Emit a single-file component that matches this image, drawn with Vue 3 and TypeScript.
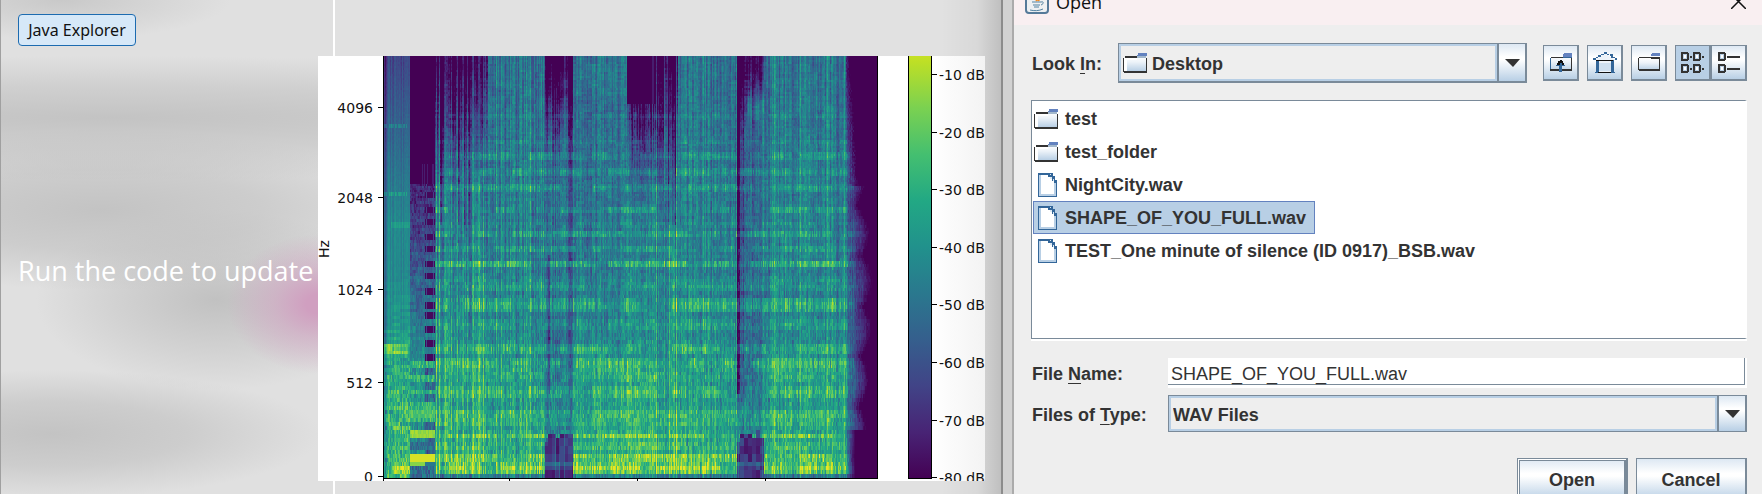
<script setup lang="ts">
import { onMounted, ref } from 'vue'

type Rgb = [number, number, number]
interface Section { from: number; to: number; kind: string }

const viridis: Rgb[] = [
  [68, 1, 84], [72, 36, 117], [65, 68, 135], [53, 95, 141], [42, 120, 142], [33, 145, 140],
  [34, 168, 132], [68, 191, 112], [122, 209, 81], [189, 223, 38], [253, 231, 37],
]
const stops = viridis.map((c, i) => ({ offset: i / 10, color: `rgb(${c.join(',')})` }))

const W = 493
const H = 422
const canvas = ref<HTMLCanvasElement | null>(null)
const lookIn = ref('Desktop')
const fileType = ref('WAV Files')
const fileName = ref('SHAPE_OF_YOU_FULL.wav')
const view = ref('list')

const files = [
  { name: 'test', folder: true },
  { name: 'test_folder', folder: true },
  { name: 'NightCity.wav', folder: false },
  { name: 'SHAPE_OF_YOU_FULL.wav', folder: false },
  { name: 'TEST_One minute of silence (ID 0917)_BSB.wav', folder: false },
]

const yTicks = [
  { label: '4096', y: 52 }, { label: '2048', y: 142 }, { label: '1024', y: 234 },
  { label: '512', y: 327 }, { label: '0', y: 421 },
]
const dbTicks = [10, 20, 30, 40, 50, 60, 70, 80].map((db, i) => ({
  label: `-${db} dB`, y: Math.round(18 + i * 57.6),
}))

const sections: Section[] = [
  { from: 0, to: 26, kind: 'intro' }, { from: 26, to: 51, kind: 'break' },
  { from: 51, to: 104, kind: 'verse' }, { from: 104, to: 161, kind: 'full' },
  { from: 161, to: 189, kind: 'drop' }, { from: 189, to: 243, kind: 'full' },
  { from: 243, to: 272, kind: 'quiet' }, { from: 272, to: 294, kind: 'verse' },
  { from: 294, to: 353, kind: 'full' }, { from: 353, to: 380, kind: 'drop2' },
  { from: 380, to: 493, kind: 'full' },
]
const harmonics = [
  [60, 4, 0.08], [86, 4, 0.08], [100, 6, 0.15], [116, 6, 0.16], [132, 6, 0.17], [154, 6, 0.19],
  [168, 5, 0.08], [178, 6, 0.2], [193, 6, 0.16], [208, 6, 0.28], [224, 5, 0.08], [231, 7, 0.12],
  [249, 11, 0.24], [269, 9, 0.13], [293, 10, 0.18], [308, 10, 0.22], [320, 9, 0.12], [336, 10, 0.16],
  [358, 8, 0.15], [366, 8, 0.12], [380, 6, 0.2], [391, 7, 0.1], [401, 8, 0.24], [412, 8, 0.27],
]

function noise(a: number, b: number): number {
  let h = Math.imul(a + 101, 374761393) ^ Math.imul(b + 57, 668265263)
  h = Math.imul(h ^ (h >>> 13), 1274126177)
  return ((h ^ (h >>> 16)) >>> 0) / 4294967296
}
function ramp(v: number, a: number, b: number): number {
  return Math.min(1, Math.max(0, (v - a) / (b - a)))
}
function rowEdges(): number[] {
  const edges: number[] = [0]
  let y = 0
  while (y < H) {
    y += y > 325 ? 4 : y > 230 ? 3 + (edges.length % 2) : y > 140 ? 3 : 2
    edges.push(Math.min(y, H))
  }
  return edges
}

function level(x: number, y: number, row: number): number {
  const kind = sections.find((s) => x >= s.from && x < s.to)?.kind ?? 'full'
  const streak = noise(x, 1) - 0.5
  const beat = noise(x, 5) > 0.88 ? 0.08 : 0
  const broad = noise(x >> 2, 2) - 0.5
  const grain = noise(x, row + 10) - 0.5
  const coarse = noise(x >> 1, (row >> 2) + 300) - 0.5
  const patch = noise(x >> 3, row + 900) - 0.5
  const depth = y / H
  let v = 0.37 + depth * 0.11 + ramp(y, 250, 410) * 0.12 + beat
  v += streak * (0.2 - 0.08 * depth) + grain * (0.06 + 0.14 * depth) + coarse * 0.1
  v += patch * 0.07 + broad * 0.05
  for (const [c, h, a] of harmonics) {
    const gate = noise(x >> 4, c + 400) > 0.25 ? 1 : 0.3
    const d = Math.abs(y - c) / (h / 2)
    if (d <= 1.2) v += a * gate * (1 - d * 0.4) * (0.3 + 1.1 * noise(x, c))
  }
  if (y > 417) v -= 0.2

  if (kind === 'intro') {
    v = 0.2 + ramp(y, 0, 170) * 0.26 + ramp(y, 220, 320) * 0.14 + ramp(y, 310, 410) * 0.08
    v += streak * 0.1 + grain * (0.04 + ramp(y, 270, 340) * 0.2) + patch * ramp(y, 200, 300) * 0.18
    if (x < 3) v -= 0.12
    if (Math.abs(y - 293) < 6 && x < 24) v += 0.2
    if ((Math.abs(y - 138) < 3 || Math.abs(y - 70) < 3) && noise(x, 7) > 0.45) v += 0.14
    if (Math.abs(y - 168) < 3 && x > 6) v += 0.08
    if (y > 408 && y < 418 && x > 7) v += 0.2
  } else if (kind === 'break') {
    const right = x > 40
    if (y < 128) v = x > 33 && y > 108 && noise(x, 3) > 0.7 ? 0.08 : 0
    else {
      v = 0.1 + ramp(y, 128, 320) * 0.4 + grain * 0.12 + coarse * 0.12 + patch * 0.1
      const pulse = Math.sin((y - 8) / 2.15) > 0
      if (right && y < 315) v = pulse ? v + 0.02 : noise(x, 8) > 0.75 ? 0.2 : 0.02
      if (y > 305) v = (pulse ? 0.64 : right ? 0.32 : 0.5) + grain * 0.22 + coarse * 0.12
      if (y > 354 && y < 362) v = 0.74 + grain * 0.15
      if (y > 375 && y < 383) v = 0.84 + grain * 0.08
      if (y > 384 && y < 395) v = 0.36 + grain * 0.2
      if (y > 396 && y < 409) v = y < 405 ? 0.94 : right ? 0.4 : 0.82
      if (y > 410) v = 0.35 + grain * 0.25
    }
  } else if (kind === 'verse') {
    const band = noise(x >> 2, 6)
    v -= (1 - ramp(y, 10, 80 + band * 80)) * (0.2 + band * 0.26) + (1 - ramp(y, 130, 240)) * 0.04
    if (noise(x >> 1, 15) > 0.8 && y < 170) v -= 0.16
    if (noise(x, 16) > 0.86) v += 0.16
  } else if (kind === 'drop' || kind === 'drop2') {
    const late = kind === 'drop2'
    const left = x < (late ? 357 : 180)
    const band = noise(x >> 2, 20)
    v -= (1 - ramp(y, 8, (late ? 40 : 80) + band * 60)) * (left ? 0.44 : 0.3) + 0.05
    if (band > 0.55 && y < 345) v -= 0.1 * (1 - ramp(y, 200, 345) * 0.5)
    v -= ramp(y, 230, 290) * (0.07 + coarse * 0.2)
    if (late && x < 356 && y < 340) v -= 0.28
    if (!late && x > 163 && x < 166 && y > 200 && y < 340) v -= 0.2
    if (late && x > 362) v += 0.14 * Math.exp(-(((y - 50) / 14) ** 2))
    if (y > 374 + noise(x >> 2, 60) * 12) {
      v = 0.04 + noise(x >> 2, (row >> 1) + 70) * 0.2 + (noise(x, 21) > 0.86 ? 0.14 : 0)
      if (y > 406 && y < 412) v += 0.12
    }
  } else if (kind === 'quiet') {
    if (y < 48) v = noise(x, 30) > 0.88 ? 0.08 : 0
    else v -= (1 - ramp(y, 48, 150)) * (noise(x, 31) > 0.5 ? 0.46 : 0.26)
    if (y > 300) v += 0.06
  } else if (x > 189 && x < 243 && y < 290 && y > 40) {
    v -= 0.04
  }

  const scallop = y < 130 ? 0 : 9 * Math.abs(Math.sin((y - 150) / 16)) - 3
  const edge = 463 + ramp(y, 0, 130) * 8 + ramp(y, 120, 210) * 9 - ramp(y, 260, 420) * 8 + scallop
  if (x > 461) {
    v = (v - 0.05) * (1 - ramp(x + noise(x, row) * 3, Math.min(461, edge - 8), edge + 3))
    if (y > 374) v *= 1 - ramp(x, 462, 471)
  }
  return Math.min(0.97, Math.max(0, v))
}

function drawSpectrogram(target: HTMLCanvasElement): void {
  const ctx = target.getContext('2d')
  if (!ctx) return
  const edges = rowEdges()
  const image = ctx.createImageData(W, H)
  for (let row = 0; row < edges.length - 1; row++) {
    const mid = (edges[row] + edges[row + 1]) / 2
    for (let x = 0; x < W; x++) {
      const v = level(x, mid, row) * 10
      const i = Math.min(9, Math.floor(v))
      for (let y = edges[row]; y < edges[row + 1]; y++) {
        const p = (y * W + x) * 4
        for (let c = 0; c < 3; c++) {
          image.data[p + c] = viridis[i][c] + (viridis[i + 1][c] - viridis[i][c]) * (v - i)
        }
        image.data[p + 3] = 255
      }
    }
  }
  ctx.putImageData(image, 0, 0)
}

onMounted(() => {
  if (canvas.value) drawSpectrogram(canvas.value)
})
</script>

<template>
  <svg class="defs" aria-hidden="true">
    <defs>
      <linearGradient id="folder-fill" x1="0" y1="0" x2="0" y2="1">
        <stop offset="0" stop-color="#fff" /><stop offset=".4" stop-color="#edf3f9" />
        <stop offset="1" stop-color="#b8cfe5" />
      </linearGradient>
      <symbol id="folder" viewBox="0 0 24 20">
        <path d="M2 5h12v-2h9v15H2z" fill="url(#folder-fill)" />
        <path d="M2 3h12v2H2zM0 5h1v14H0zM1 18h23v2H1zM23 5h1v14h-1z" fill="#333" />
        <path d="M1 5h13v2H4v11H1z" fill="#fff" />
        <path d="M15 0h9v3h-10v-1h1z" fill="#6382bf" /><path d="M14 3h9v2h-9z" fill="#a3b8cc" />
      </symbol>
      <symbol id="file" viewBox="0 0 19 24">
        <path d="M0 0h15v3h2v4h2v17H0z" fill="#336699" />
        <path d="M1 2h10l7 8v13H1z" fill="#b8cfe5" /><path d="M3 2h8l5 7v12H3z" fill="#fff" />
        <path d="M10 1h3v2h2v2h2v3h1v2h-2V8h-2V6h-2V4h-2z" fill="#336699" />
        <path d="M12 4h2v2h-2zM15 6h1v2h-1zM12 1h1v1h-1z" fill="#dce8f3" />
      </symbol>
    </defs>
  </svg>
  <div class="desktop">
    <main class="viewer">
      <div class="side">
        <button class="explorer" type="button">Java Explorer</button>
        <p class="hint">Run the code to update</p>
      </div>
      <figure class="figure" aria-label="Spectrogram">
        <svg class="y-axis" width="66" height="425" aria-hidden="true">
          <text class="tick" transform="translate(11 193) rotate(-90)" text-anchor="middle">Hz</text>
          <g v-for="t in yTicks" :key="t.label">
            <text class="tick" x="55" :y="t.y + 5" text-anchor="end">{{ t.label }}</text>
            <path :d="`M60 ${t.y - 0.5}h5`" stroke="#000" />
          </g>
          <path d="M65.500 0v425" stroke="#000" />
        </svg>
        <div class="plot">
          <canvas ref="canvas" class="spectrogram" :width="W" :height="H"></canvas>
          <div class="x-ticks"><i></i><i></i><i></i><i></i></div>
        </div>
        <svg class="colorbar" width="77" height="425" aria-hidden="true">
          <defs>
            <linearGradient id="db" gradientUnits="userSpaceOnUse" x1="0" y1="422" x2="0" y2="-40">
              <stop v-for="s in stops" :key="s.offset" :offset="s.offset" :stop-color="s.color" />
            </linearGradient>
          </defs>
          <path d="M0 0h24v423H0z" fill="#000" /><path d="M1 0h22v422H1z" fill="url(#db)" />
          <g v-for="t in dbTicks" :key="t.label">
            <path :d="`M24 ${t.y + 0.5}h5`" stroke="#000" />
            <text class="tick" x="31" :y="t.y + 6">{{ t.label }}</text>
          </g>
        </svg>
      </figure>
    </main>

    <section class="dialog" aria-label="Open">
      <header class="titlebar">
        <svg class="java" width="24" height="24" viewBox="0 0 24 24" aria-hidden="true">
          <rect x="1" y="1" width="22" height="22" rx="3" fill="#edf0f2" stroke="#557a99" stroke-width="2" />
          <path d="M13 3c3 3-4 4-1 8M15 7c-2 1-2 2-1 4" fill="none" stroke="#f08a24" stroke-width="2" />
          <path d="M7 12h9M8 15h7M9 17h5M5 20c4 1 9 1 13-1M16 12c3-1 3 2 0 3" fill="none" stroke="#5382a1" stroke-width="1" />
        </svg>
        <h1 class="title">Open</h1>
        <button class="close" type="button" aria-label="Close">
          <svg width="15" height="15" viewBox="0 0 15 15"><path d="M0 0l15 15M15 0L0 15" stroke="#111" stroke-width="1.500" /></svg>
        </button>
      </header>

      <div class="body">
        <div class="lookup">
          <label for="look-in">Look <u>I</u>n:</label>
          <div class="combo wide">
            <div class="value">
              <svg width="24" height="20" shape-rendering="crispEdges"><use href="#folder" /></svg>
              <select id="look-in" v-model="lookIn"><option>Desktop</option></select>
            </div>
            <span class="arrow"><svg width="15" height="8"><path d="M0 0h15L8 8z" fill="#333" /></svg></span>
          </div>
          <div class="tools">
            <button class="tool" type="button" aria-label="Up one level">
              <svg width="22" height="20" viewBox="0 0 22 20" shape-rendering="crispEdges">
                <path d="M1 5h12V2h8v16H1z" fill="url(#folder-fill)" />
                <path d="M1 4h12v1H1zM0 16h21v2H0zM21 5h1v13h-1z" fill="#333" /><path d="M0 5h1v11H0zM13 4h9v1h-9z" fill="#336699" />
                <path d="M14 0h8v4h-9V1h1z" fill="#6382bf" /><path d="M9 10h3v9H9zM6 12h9v1H6z" fill="#336699" />
                <path d="M10 7h2v1h1v2h1v2h-2v-2h-2v2H7v-2h1V8h2z" fill="#111" />
              </svg>
            </button>
            <button class="tool" type="button" aria-label="Home">
              <svg width="24" height="22" viewBox="0 0 24 22" shape-rendering="crispEdges">
                <path d="M12 2L1 8h22zM4 8h16v12H4z" fill="#edf3f9" /><path d="M6 11h13v8H6z" fill="#cfe0f0" />
                <path d="M11 0h3v2h-3zM8 2h3v1H8zM14 2h2v1h-2zM5 3h3v2H5zM17 2h3v3h2v1h-4zM3 5h2v1H3zM0 6h3v2H0zM22 6h2v2h-2zM3 8h3v12H3zM18 8h3v12h-3zM2 20h4v1H2zM18 20h4v1h-4z" fill="#336699" />
                <path d="M3 8h17v1H3zM5 20h13v1H5z" fill="#111" />
              </svg>
            </button>
            <button class="tool" type="button" aria-label="Create new folder">
              <svg width="22" height="20" viewBox="0 0 22 20" shape-rendering="crispEdges">
                <path d="M1 5h20v12H1z" fill="url(#folder-fill)" />
                <path d="M1 4h12v1H1zM0 5h1v12H0zM1 16h21v2H1zM21 5h1v13h-1zM13 4h9v2h-9z" fill="#333" />
                <path d="M14 0h8v3h-9V1h1z" fill="#6382bf" />
              </svg>
            </button>
            <div class="views">
              <button class="tool" :class="{ on: view === 'list' }" type="button" aria-label="List" @click="view = 'list'">
                <svg width="24" height="22" viewBox="0 0 24 22" shape-rendering="crispEdges">
                  <g v-for="p in [[0, 0], [12, 0], [0, 12], [12, 12]]" :key="p.join()" :transform="`translate(${p[0]} ${p[1]})`">
                    <path d="M0 0h7v1h1v7H7v1H0z" fill="#333" /><path d="M2 2h4v5H2z" fill="#b8cfe5" /><path d="M3 3h2v3H3z" fill="#fff" /><path d="M9 4h2v2H9z" fill="#333" />
                  </g>
                </svg>
              </button>
              <button class="tool" :class="{ on: view === 'details' }" type="button" aria-label="Details" @click="view = 'details'">
                <svg width="24" height="22" viewBox="0 0 24 22" shape-rendering="crispEdges">
                  <g v-for="p in [0, 12]" :key="p" :transform="`translate(1 ${p})`">
                    <path d="M0 0h7v1h1v7H7v1H0z" fill="#333" /><path d="M2 2h4v5H2z" fill="#b8cfe5" /><path d="M3 3h2v3H3z" fill="#fff" /><path d="M9 4h13v2H9z" fill="#333" />
                  </g>
                </svg>
              </button>
            </div>
          </div>
        </div>

        <ul class="files" role="listbox" aria-label="Files">
          <li v-for="f in files" :key="f.name" class="file" :class="{ selected: f.name === fileName }" role="option" :aria-selected="f.name === fileName" @click="fileName = f.name">
            <svg v-if="f.folder" width="24" height="20" shape-rendering="crispEdges"><use href="#folder" /></svg>
            <svg v-else class="doc" width="19" height="24" shape-rendering="crispEdges"><use href="#file" /></svg>
            <span>{{ f.name }}</span>
          </li>
        </ul>

        <div class="fields">
          <label for="file-name">File <u>N</u>ame:</label>
          <input id="file-name" v-model="fileName" class="name" type="text" />
          <label for="file-type">Files of <u>T</u>ype:</label>
          <div class="combo">
            <div class="value">
              <select id="file-type" v-model="fileType"><option>WAV Files</option></select>
            </div>
            <span class="arrow"><svg width="15" height="8"><path d="M0 0h15L8 8z" fill="#333" /></svg></span>
          </div>
        </div>

        <div class="actions">
          <button class="action default" type="button">Open</button>
          <button class="action" type="button">Cancel</button>
        </div>
      </div>
    </section>
  </div>
</template>

<style>
body { overflow: hidden; }
</style>

<style scoped>
.defs { position: absolute; width: 0; height: 0; }
.desktop {
  display: grid;
  grid-template-columns: minmax(0, 1003fr) minmax(0, 750fr);
  column-gap: 9px;
  height: 100vh;
  overflow: hidden;
  background: #d2d2d2;
}
.viewer {
  box-sizing: border-box;
  display: grid;
  grid-template-columns: 317px minmax(0, 1fr);
  align-items: start;
  padding-right: 16px;
  border-left: 1px solid #a0a0a0;
  border-right: 2px solid #8c8c8c;
  background:
    linear-gradient(90deg, transparent calc(100% - 60px), #0000000a calc(100% - 24px), #00000026),
    linear-gradient(#fff, #fff) 332px 0 / 2px 100% no-repeat,
    linear-gradient(#e1e1e1, #e1e1e1) 334px 0 / 100% 100% no-repeat,
    radial-gradient(92px 70px at 318px 304px, #d09fc0 0 14%, #d09fc088 48%, #d09fc000),
    radial-gradient(170px 40px at 60px 0, #bdbdbdaa, #bdbdbd00),
    radial-gradient(900px 62px at 110px 118px, #bcbcbccc, #bcbcbc77 50%, #bcbcbc00),
    radial-gradient(320px 80px at 100px 210px, #bcbcbccc, #bcbcbc88 50%, #bcbcbc00),
    radial-gradient(180px 90px at 215px 300px, #b6b6b6bb, #bcbcbc66 55%, #bcbcbc00),
    radial-gradient(270px 64px at 50px 434px, #bcbcbccc, #bcbcbc88 50%, #bcbcbc00),
    #e0e0e0;
}
.side { padding: 14px 0 0 17px; }
.explorer {
  display: block;
  box-sizing: border-box;
  width: 118px;
  height: 32px;
  padding: 0;
  border: 1px solid #1c6bb0;
  border-radius: 4px;
  background: #d6e8f8;
  color: #111;
  font: 16px/30px "Noto Sans", "Open Sans", sans-serif;
}
.hint {
  margin: 205px 0 0;
  color: #fff;
  font: 27px/40px "Open Sans", "Noto Sans", sans-serif;
  white-space: nowrap;
}
.figure {
  display: grid;
  grid-template-columns: 66px minmax(0, 1fr) 77px;
  height: 425px;
  margin: 56px 0 0;
  overflow: hidden;
  background: linear-gradient(90deg, #fff 92%, #f3f3f3);
}
.tick { font: 14px "DejaVu Sans", sans-serif; fill: #111; }
.plot { margin-right: 30px; }
.spectrogram {
  display: block;
  box-sizing: border-box;
  width: 100%;
  height: 423px;
  border-right: 1px solid #000;
  border-bottom: 1px solid #000;
  image-rendering: pixelated;
}
.x-ticks { display: grid; grid-template-columns: 126fr 128fr 128fr 112fr; height: 2px; }
.x-ticks i { border-right: 1px solid #000; }
.x-ticks i:last-child { border: 0; }

.dialog {
  min-width: 0;
  border-left: 2px solid #ababab;
  background: #eee;
  color: #333;
  font: bold 18px/22px "Liberation Sans", Arial, sans-serif;
}
.titlebar {
  display: flex;
  align-items: center;
  gap: 7px;
  height: 47px;
  margin-top: -22px;
  padding: 0 16px 0 11px;
  background: #f9eff1;
}
.title { flex: 1; margin: 0; color: #111; font: 18px/24px "Open Sans", "Noto Sans", sans-serif; }
.close { display: flex; padding: 0; border: 0; background: none; }
.body { padding: 18px 15px 0 17px; }
.lookup { display: flex; align-items: center; }
.lookup > label { flex: none; width: 86px; }
label { padding: 2px 0 0 1px; }
u { text-underline-offset: 3px; text-decoration-thickness: 1px; }
.combo {
  box-sizing: border-box;
  display: flex;
  min-width: 0;
  height: 37px;
  border: 1px solid #7a8a99;
  border-right-width: 2px;
}
.combo.wide { flex: 1; height: 40px; border-bottom-width: 2px; }
.value {
  display: flex;
  flex: 1;
  align-items: center;
  gap: 5px;
  min-width: 0;
  padding-left: 2px;
  border: 2px solid #b8cfe5;
}
select {
  flex: 1;
  min-width: 0;
  padding: 2px 0 0;
  border: 0;
  appearance: none;
  background: none;
  color: inherit;
  font: inherit;
}
.arrow, .tool, .action { background: linear-gradient(#dde8f3, #fff 35%, #fff 42%, #b8cfe5); }
.arrow {
  display: flex;
  align-items: center;
  justify-content: center;
  width: 26px;
  border-left: 2px solid #7a8a99;
  pointer-events: none;
}
.tools { display: flex; gap: 8px; margin-left: 16px; }
.views { display: flex; }
.tool {
  display: flex;
  align-items: center;
  justify-content: center;
  box-sizing: border-box;
  width: 36px;
  height: 36px;
  padding: 0;
  border: solid #7a8a99;
  border-width: 1px 2px 2px 1px;
}
.tool.on { background: #b8cfe5; }
.files {
  box-sizing: border-box;
  height: 239px;
  margin: 17px 0 0;
  padding: 1px 0 0 1px;
  border: 1px solid #7a8a99;
  border-right: 2px solid #fff;
  background: #fff;
  list-style: none;
  box-shadow: 0 2px #fff;
}
.file {
  box-sizing: border-box;
  display: flex;
  align-items: center;
  gap: 7px;
  width: max-content;
  height: 33px;
  padding: 1px 8px 0 0;
  border: 1px solid transparent;
}
.file.selected { border-color: #6382bf; background: #b8cfe5; }
.doc { margin: 0 1px 0 4px; }
.fields {
  display: grid;
  grid-template-columns: 137px minmax(0, 1fr);
  align-items: center;
  row-gap: 7px;
  margin-top: 19px;
}
.name {
  box-sizing: border-box;
  width: 100%;
  height: 30px;
  padding: 2px 0 0 3px;
  border: 0;
  background: #fff;
  box-shadow: inset -2px -3px #fff, inset -3px -4px #7a8a99;
  color: #333;
  font: 18px/22px "Liberation Sans", Arial, sans-serif;
}
.actions { display: flex; justify-content: flex-end; gap: 8px; margin-top: 26px; }
.action {
  box-sizing: border-box;
  width: 111px;
  height: 44px;
  padding: 0;
  border: solid #7a8a99;
  border-width: 1px 2px 2px 1px;
  color: #333;
  font: inherit;
}
.action.default { box-shadow: inset 1px 1px #fff, inset 2px 2px #7a8a99, inset -2px -2px #7a8a99; }
</style>
